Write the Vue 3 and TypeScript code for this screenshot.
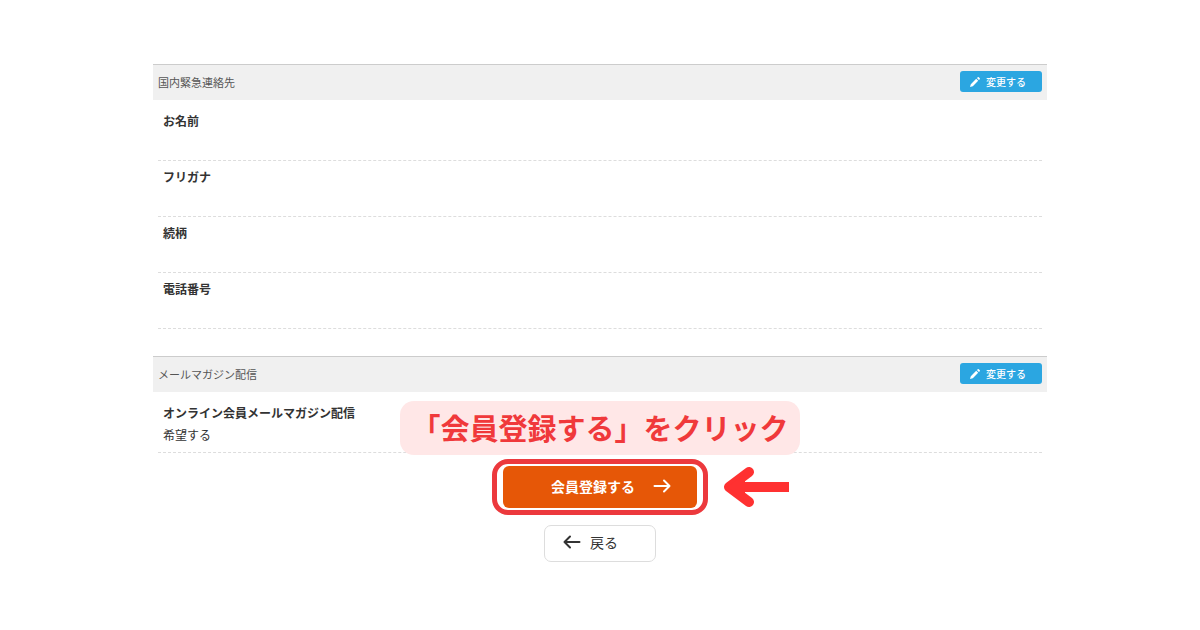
<script setup lang="ts">
interface Field { label: string; value: string }
interface Section { id: string; title: string; fields: Field[] }

const sections: Section[] = [
  {
    id: 'contact',
    title: '国内緊急連絡先',
    fields: [
      { label: 'お名前', value: '' },
      { label: 'フリガナ', value: '' },
      { label: '続柄', value: '' },
      { label: '電話番号', value: '' },
    ],
  },
  {
    id: 'magazine',
    title: 'メールマガジン配信',
    fields: [{ label: 'オンライン会員メールマガジン配信', value: '希望する' }],
  },
]
</script>

<template>
  <main class="page">
    <section v-for="section in sections" :key="section.id" class="section">
      <header class="bar">
        <h2 class="title">{{ section.title }}</h2>
        <button type="button" class="edit">
          <svg class="pencil" viewBox="0 0 12 12" aria-hidden="true">
            <path d="M1 11l.8-2.800 5.400-5.400 2 2-5.400 5.400zM7.900 2.100l.9-.9q.5-.4 1 0l1 1q.4.5 0 1l-.9.9z" />
          </svg>
          変更する
        </button>
      </header>
      <dl class="fields">
        <div v-for="field in section.fields" :key="field.label" class="field">
          <dt>{{ field.label }}</dt>
          <dd>{{ field.value }}</dd>
        </div>
      </dl>
      <p v-if="section.id === 'magazine'" class="callout">「会員登録する」をクリック</p>
    </section>

    <div class="actions">
      <div class="highlight">
        <button type="button" class="submit">
          会員登録する
          <svg class="arrow" viewBox="0 0 18 16" aria-hidden="true">
            <path d="M1.500 8h15M11 2.500L16.500 8 11 13.500" />
          </svg>
        </button>
        <svg class="pointer" viewBox="0 0 68 42" aria-hidden="true">
          <path class="shaft" d="M10 21h56" />
          <path class="head" d="M26 6L6 21l20 15" />
          <path class="tip" d="M4 21L22 8v26z" />
        </svg>
      </div>
      <button type="button" class="back">
        <svg class="arrow" viewBox="0 0 18 16" aria-hidden="true">
          <path d="M16.500 8h-15M7 2.500L1.500 8 7 13.500" />
        </svg>
        戻る
      </button>
    </div>
  </main>
</template>

<style>
body {
  margin: 0;
  background: #fff;
}
</style>

<style scoped>
.page {
  box-sizing: border-box;
  width: 75%;
  padding: 64px 3px 0;
  margin: 0 auto;
  color: #333;
  font-family: "Noto Sans CJK JP", sans-serif;
  font-size: 12px;
  line-height: 22px;
}

.section {
  position: relative;
}

.section + .section {
  margin-top: 27px;
}

.bar {
  display: flex;
  align-items: center;
  justify-content: space-between;
  padding: 6px 5px 8px;
  background: #f0f0f0;
  border-top: 1px solid #ccc;
}

.title {
  margin: 0;
  color: #555;
  font-size: 11px;
  font-weight: 400;
  line-height: 20px;
}

button {
  font-family: inherit;
  cursor: pointer;
}

.edit {
  display: flex;
  align-items: center;
  gap: 5px;
  height: 21px;
  padding: 0 16px 0 9px;
  border: 0;
  border-radius: 3px;
  background: #2ba6e1;
  color: #fff;
  font-size: 10px;
  font-weight: 500;
  line-height: 20px;
}

.pencil {
  width: 12px;
  height: 12px;
  fill: #fff;
}

.fields {
  margin: 0;
  padding: 5px 5px 0;
}

.field {
  padding: 5px 5px 6px;
  border-bottom: 1px dashed #ddd;
}

dt {
  font-weight: 700;
}

dd {
  min-height: 22px;
  margin: 0;
}

.callout {
  box-sizing: border-box;
  position: absolute;
  top: 45px;
  left: 50%;
  width: 400px;
  margin: 0;
  padding-bottom: 2px;
  transform: translateX(-50%);
  border-radius: 14px;
  background: #ffe7e7;
  color: #f0393b;
  font-size: 29px;
  font-weight: 700;
  line-height: 52px;
  text-align: center;
  white-space: nowrap;
}

.actions {
  display: flex;
  flex-direction: column;
  align-items: center;
  gap: 10px;
  padding-top: 6px;
}

.highlight {
  position: relative;
  padding: 2px 6px;
  border: 5px solid #ec393d;
  border-radius: 16px;
}

.submit {
  display: flex;
  align-items: center;
  gap: 18px;
  height: 42px;
  padding: 0 26px 3px 48px;
  border: 0;
  border-radius: 6px;
  background: #e65707;
  color: #fff;
  font-size: 14px;
  font-weight: 700;
}

.arrow {
  width: 18px;
  height: 16px;
  fill: none;
  stroke: currentColor;
  stroke-width: 2;
  stroke-linecap: round;
  stroke-linejoin: round;
}

.pointer {
  position: absolute;
  top: 2px;
  left: calc(100% + 20px);
  width: 68px;
  height: 42px;
  fill: none;
  stroke: #ff3131;
  stroke-width: 10;
}

.head {
  stroke-linecap: round;
  stroke-linejoin: round;
}

.tip {
  fill: #ff3131;
  stroke: none;
}

.back {
  display: flex;
  align-items: center;
  gap: 9px;
  height: 37px;
  padding: 0 37px 3px 18px;
  border: 1px solid #ddd;
  border-radius: 7px;
  background: #fff;
  color: #333;
  font-size: 14px;
}
</style>
